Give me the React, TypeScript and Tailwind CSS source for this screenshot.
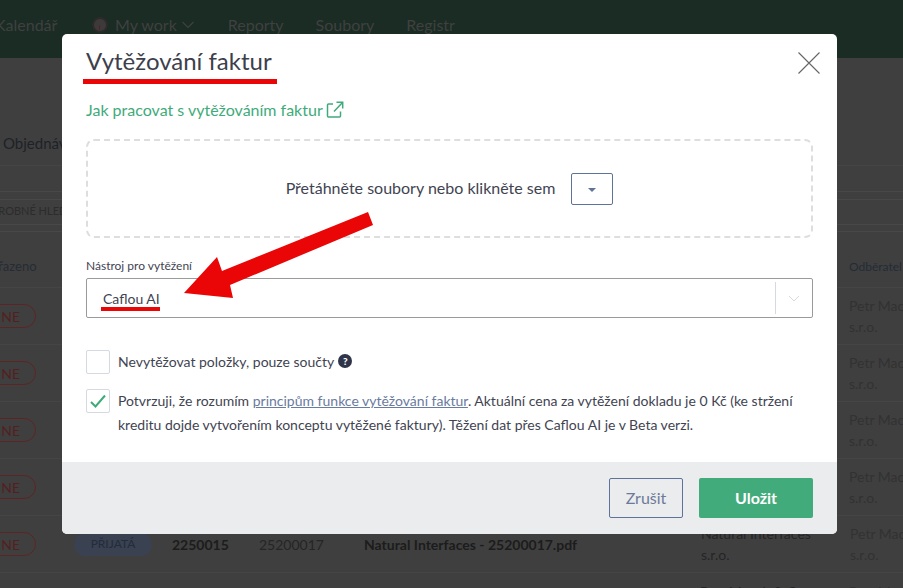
const rows = [0, 1, 2, 3];

function NePill() {
  return (
    <span className="ml-[-15px] flex h-[24px] w-[51px] shrink-0 items-center justify-end rounded-full border border-[#5e2424] pr-[15px] text-[14px] text-[#541f1f]">
      NE
    </span>
  );
}

function Customer({ name }: { name: string }) {
  return (
    <div className="w-[54px] shrink-0 text-[14px] leading-[21px] whitespace-nowrap text-[#323232]">
      <div>{name}</div>
      <div>s.r.o.</div>
    </div>
  );
}

function Background() {
  return (
    <div className="flex h-[588px] w-[903px] flex-col overflow-hidden bg-[#3f3f3f] text-[#252525]">
      <header className="flex h-[58px] shrink-0 items-center bg-[#1a2c24] pb-[8px] text-[16px] whitespace-nowrap text-[#404040]">
        <span className="ml-[-5px] w-[62px] shrink-0">Kalendář</span>
        <span className="relative ml-[35px] h-[16px] w-[16px] shrink-0 rounded-full border-2 border-[#2b2b2b] bg-[#3f3a3a]">
          <span className="absolute top-[6px] left-[5px] h-[5px] w-px bg-[#4a2626]" />
        </span>
        <span className="ml-[7px]">My work</span>
        <svg className="ml-[5px] shrink-0" width="12" height="8" viewBox="0 0 12 8" fill="none" stroke="#404040" strokeWidth="1.2">
          <path d="M.5 1 6 6.500 11.500 1" />
        </svg>
        <span className="ml-[34px]">Reporty</span>
        <span className="ml-[32px]">Soubory</span>
        <span className="ml-[32px]">Registr</span>
      </header>
      <div className="flex h-[108px] shrink-0 items-end border-b border-[#454545] pb-[11px] pl-[3px] text-[15px] text-[#1e2228]">
        Objednávky
      </div>
      <div className="mt-[25px] flex h-[41px] shrink-0 items-center border-y border-[#484848]">
        <div className="flex h-[26px] w-full items-center border-y border-[#484848] text-[11px] whitespace-nowrap text-[#2c2c2c]">
          <span className="ml-[-16px]">VÝROBNÉ HLEDÁNÍ</span>
        </div>
      </div>
      <div className="flex h-[56px] shrink-0 items-center justify-between border-b border-[#454545] pt-[14px] whitespace-nowrap text-[#262c33]">
        <span className="ml-[-16px] text-[13px]">Zařazeno</span>
        <span className="w-[54px] text-[12px] text-[#232c36]">Odběratel</span>
      </div>
      {rows.map((row) => (
        <div key={row} className="flex h-[57px] shrink-0 items-center justify-between border-b border-[#454545]">
          <NePill />
          <Customer name="Petr Macek" />
        </div>
      ))}
      <div className="flex h-[57px] shrink-0 items-center border-b border-[#454545] text-[14px] whitespace-nowrap">
        <NePill />
        <span className="ml-[38px] flex h-[23px] w-[78px] shrink-0 items-center justify-center rounded-full bg-[#3a4150] text-[12px] text-[#222c3c]">
          PŘIJATÁ
        </span>
        <span className="ml-[20px] w-[57px] shrink-0 font-bold text-[#1c1c1c]">2250015</span>
        <span className="ml-[30px] w-[65px] shrink-0">25200017</span>
        <span className="ml-[40px] w-[337px] shrink-0 font-bold text-[#1c1c1c]">Natural Interfaces - 25200017.pdf</span>
        <div className="w-[149px] shrink-0 leading-[21px]">
          <div>Natural Interfaces</div>
          <div>s.r.o.</div>
        </div>
        <Customer name="Petr Macek" />
      </div>
      <div className="flex h-[57px] shrink-0 items-center pl-[700px] text-[14px] leading-[21px] whitespace-nowrap">
        <div className="w-[149px] shrink-0">
          <div>Petr Macek &amp; Co</div>
          <div>s.r.o.</div>
        </div>
        <Customer name="Petr Macek" />
      </div>
    </div>
  );
}

function Arrow() {
  return (
    <svg className="pointer-events-none absolute top-0 left-0" width="903" height="588" viewBox="0 0 903 588">
      <polygon points="368,212 373,225 230,285 233,298 184,293 217,257 222,271" fill="#ea0606" />
    </svg>
  );
}

export default function App() {
  return (
    <div className="relative h-[588px] w-[903px] overflow-hidden font-['Lato','Noto_Sans',sans-serif]">
      <Background />

      <div className="absolute inset-0 flex justify-center pt-[34px] pr-[4px]">
        <div className="relative flex h-[500px] w-[775px] flex-col overflow-hidden rounded-[5px] bg-white text-[#3f4452]">
          <div className="flex-1 px-[24px]">
            <div className="flex items-start justify-between">
              <h1 className="mt-[11px] text-[24px] leading-[32px] text-[#3d3f4c]">Vytěžování faktur</h1>
              <svg className="mt-[18px] mr-[-7px]" width="22" height="22" viewBox="0 0 22 22" stroke="#666" strokeWidth="1.1">
                <path d="M.5.5l21 21M21.500.5l-21 21" />
              </svg>
            </div>
            <a className="mt-[21px] flex items-center gap-[3px] text-[16px] leading-[24px] text-[#3fab7a]">
              Jak pracovat s vytěžováním faktur
              <svg width="18" height="18" viewBox="0 0 18 18" fill="none" stroke="currentColor" strokeWidth="1.5">
                <path d="M7 3H2.500a1 1 0 0 0-1 1v11a1 1 0 0 0 1 1h11a1 1 0 0 0 1-1v-4.500" />
                <path d="M8 10.500 16.500 1.500M10.500 1.200h6.200v6.200" />
              </svg>
            </a>
            <div className="mt-[17px] flex h-[99px] items-center justify-center gap-[16px] rounded-[8px] border-2 border-dashed border-[#dedede] text-[16px]">
              <span className="mt-[-2px]">Přetáhněte soubory nebo klikněte sem</span>
              <button className="flex h-[32px] w-[42px] items-center justify-center rounded-[2px] border border-[#5f7299]">
                <span className="mt-[2px] h-0 w-0 border-x-[4px] border-t-[4px] border-x-transparent border-t-[#5f7299]" />
              </button>
            </div>
            <label className="mt-[20px] block text-[12px] leading-[16px]">Nástroj pro vytěžení</label>
            <div className="mt-[4px] flex h-[40px] items-center rounded-[2px] border border-[#9a9a9a] pl-[16px] text-[14px]">
              <span className="flex-1">Caflou AI</span>
              <span className="h-[32px] w-px bg-[#d5d9e2]" />
              <svg className="mx-[12px]" width="12" height="7" viewBox="0 0 12 7" fill="none" stroke="#d5d9e2">
                <path d="M1 1l5 5 5-5" />
              </svg>
            </div>
            <div className="mt-[32px] flex items-center gap-[8px] text-[14px]">
              <span className="h-[24px] w-[24px] rounded-[2px] border border-[#d5d9e2]" />
              <span className="mt-[-2px]">Nevytěžovat položky, pouze součty</span>
              <span className="mt-[-2px] ml-[-4px] flex h-[14px] w-[14px] items-center justify-center rounded-full bg-[#2f3549] text-[10px] font-black text-white">
                ?
              </span>
            </div>
            <div className="mt-[15px] flex gap-[8px] text-[14px] leading-[24px]">
              <span className="flex h-[24px] w-[24px] shrink-0 items-center justify-center rounded-[2px] border border-[#d5d9e2]">
                <svg width="16" height="14" viewBox="0 0 16 14" fill="none" stroke="#3fab7a" strokeWidth="2">
                  <path d="M1 8l4.500 4.500L15 1.500" />
                </svg>
              </span>
              <p>
                Potvrzuji, že rozumím{' '}
                <a className="text-[#6a7ba0] underline">principům funkce vytěžování faktur</a>. Aktuální cena za
                vytěžení dokladu je 0 Kč (ke stržení kreditu dojde vytvořením konceptu vytěžené faktury). Těžení dat
                přes Caflou AI je v Beta verzi.
              </p>
            </div>
          </div>
          <div className="flex h-[72px] items-start justify-end gap-[16px] bg-[#ebecee] pt-[16px] pr-[24px] text-[16px]">
            <button className="h-[40px] w-[74px] rounded-[2px] border border-[#5f7299] text-[#6b7a99]">Zrušit</button>
            <button className="h-[40px] w-[114px] rounded-[2px] bg-[#42ab7b] font-bold text-white">Uložit</button>
          </div>
        </div>
      </div>

      {/* red annotations over the screenshot */}
      <div className="absolute top-[79px] left-[83px] h-[5px] w-[194px] bg-[#ea0606]" />
      <div className="absolute top-[307px] left-[101px] h-[4px] w-[59px] bg-[#ea0606]" />
      <Arrow />
    </div>
  );
}
